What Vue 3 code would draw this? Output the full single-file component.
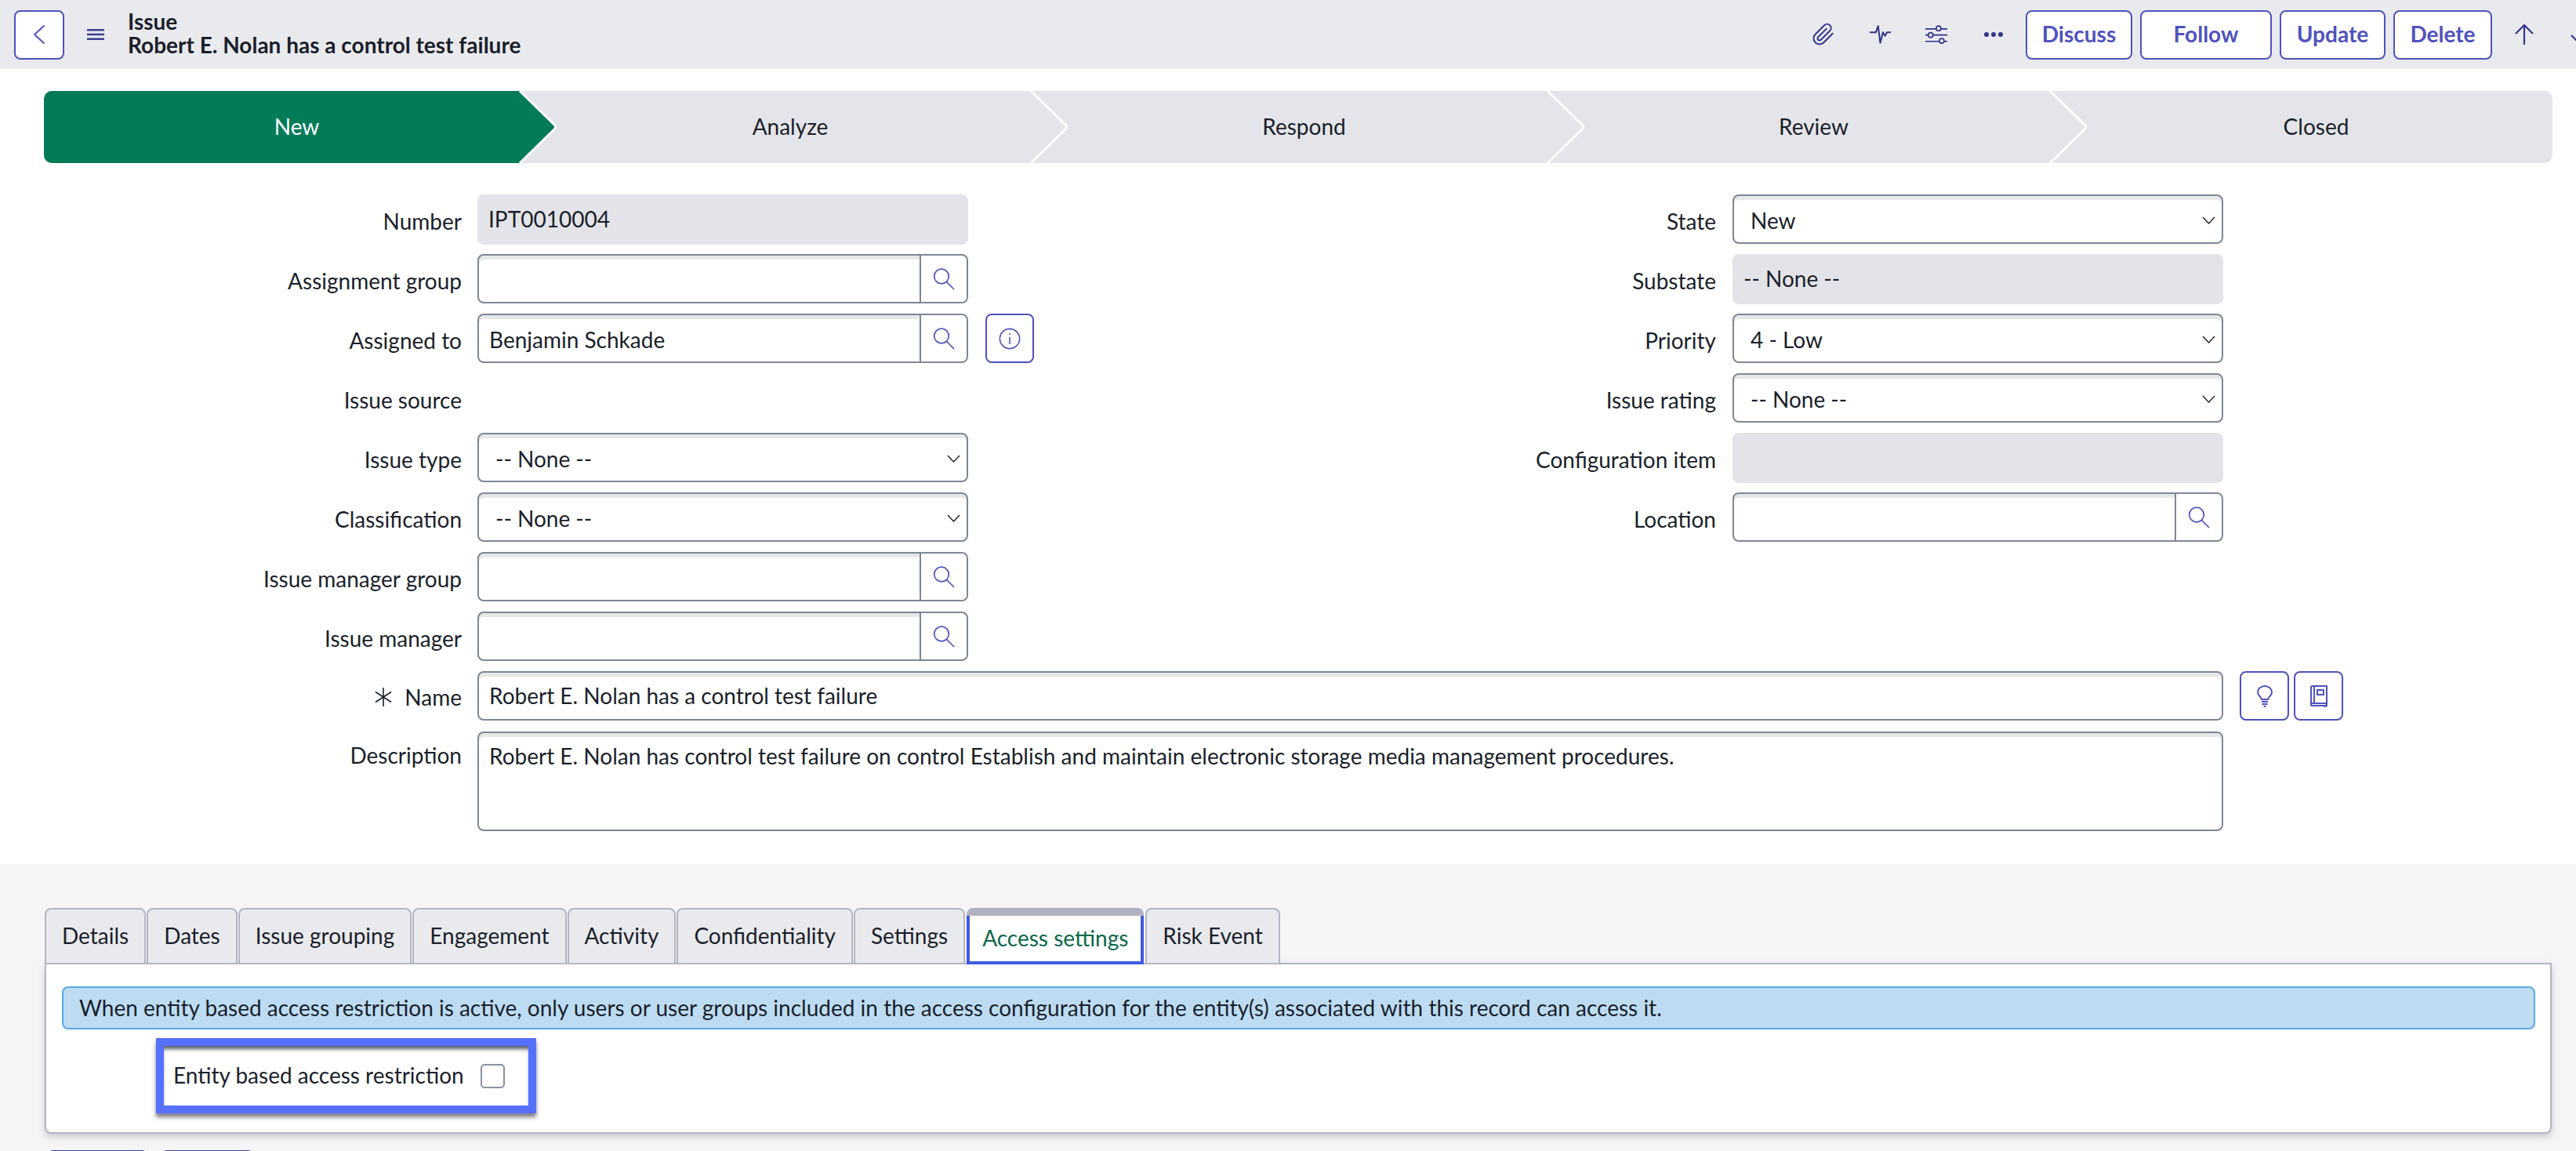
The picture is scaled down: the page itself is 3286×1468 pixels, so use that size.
<script setup>
const steps = [
  { label: 'New', width: 607, current: true },
  { label: 'Analyze', width: 652 },
  { label: 'Respond', width: 659 },
  { label: 'Review', width: 641 },
  { label: 'Closed', width: 641, last: true },
]

const leftFields = [
  { label: 'Number', type: 'readonly', value: 'IPT0010004' },
  { label: 'Assignment group', type: 'lookup', value: '' },
  { label: 'Assigned to', type: 'lookup', value: 'Benjamin Schkade', info: true },
  { label: 'Issue source', type: 'none' },
  { label: 'Issue type', type: 'select', value: '-- None --' },
  { label: 'Classification', type: 'select', value: '-- None --' },
  { label: 'Issue manager group', type: 'lookup', value: '' },
  { label: 'Issue manager', type: 'lookup', value: '' },
]

const rightFields = [
  { label: 'State', type: 'select', value: 'New' },
  { label: 'Substate', type: 'readonly', value: '-- None --' },
  { label: 'Priority', type: 'select', value: '4 - Low' },
  { label: 'Issue rating', type: 'select', value: '-- None --' },
  { label: 'Configuration item', type: 'readonly', value: '' },
  { label: 'Location', type: 'lookup', value: '' },
]

const columns = [
  { name: 'left', fields: leftFields },
  { name: 'right', fields: rightFields },
]

const tabs = ['Details', 'Dates', 'Issue grouping', 'Engagement', 'Activity', 'Confidentiality', 'Settings', 'Access settings', 'Risk Event']
const activeTab = 'Access settings'
</script>

<template>
  <div class="page">
    <header class="topbar">
      <button class="btn back-btn" aria-label="Back">
        <svg width="16" height="26" viewBox="0 0 16 26" fill="none" stroke="currentColor" stroke-width="2" stroke-linecap="round" stroke-linejoin="round"><path d="M14 2 2 13l12 11" /></svg>
      </button>
      <svg class="burger" width="22" height="14" viewBox="0 0 22 14" fill="currentColor"><rect width="22" height="2.5" /><rect y="5.7" width="22" height="2.5" /><rect y="11.5" width="22" height="2.5" /></svg>
      <div class="title">
        <div>Issue</div>
        <div>Robert E. Nolan has a control test failure</div>
      </div>
      <div class="actions">
        <svg class="tool clip" width="30" height="30" viewBox="0 0 24 24" fill="none" stroke="currentColor" stroke-width="1.6" stroke-linecap="round" stroke-linejoin="round"><path d="M21.44 11.05l-9.19 9.19a6 6 0 0 1-8.49-8.49l9.19-9.19a4 4 0 0 1 5.66 5.66l-9.2 9.19a2 2 0 0 1-2.83-2.83l8.49-8.48" /></svg>
        <svg class="tool pulse" width="27" height="24" viewBox="0 0 80 70" fill="none" stroke="currentColor" stroke-width="6" stroke-linejoin="round"><path d="M0 27h23l9-24 8 64 10-40 8 13 7-13h15" /></svg>
        <svg class="tool sliders" width="28" height="24" viewBox="0 0 83 66" fill="none" stroke="currentColor" stroke-width="5">
          <path d="M0 12h83M0 35h83M0 59h83" />
          <circle cx="50" cy="10" r="9" fill="#e9eaee" />
          <circle cx="20" cy="35" r="9" fill="#e9eaee" />
          <circle cx="62" cy="57" r="9" fill="#e9eaee" />
        </svg>
        <svg class="tool dots" width="24" height="6" viewBox="0 0 72 18" fill="currentColor"><circle cx="9" cy="9" r="9" /><circle cx="36" cy="9" r="9" /><circle cx="63" cy="9" r="9" /></svg>
        <button class="btn text-btn discuss">Discuss</button>
        <button class="btn text-btn follow">Follow</button>
        <button class="btn text-btn update">Update</button>
        <button class="btn text-btn delete">Delete</button>
        <svg class="arrow up" width="24" height="26" viewBox="0 0 24 26" fill="none" stroke="currentColor" stroke-width="2.2"><path d="M12 26V2M1 12 12 1l11 11" /></svg>
        <svg class="arrow down" width="24" height="26" viewBox="0 0 24 26" fill="none" stroke="currentColor" stroke-width="2.2"><path d="M12 0v24M1 14l11 11 11-11" /></svg>
      </div>
    </header>

    <main class="form-area">
      <div class="stepper">
        <div v-for="s in steps" :key="s.label" class="step" :class="{ current: s.current }" :style="{ width: s.width + 'px' }">
          <span>{{ s.label }}</span>
          <svg v-if="!s.last" class="chevron" width="50" height="92" viewBox="0 0 50 92">
            <path d="M0 0 L45 44 Q46 46 45 48 L0 92" :fill="s.current ? '#027b59' : 'none'" stroke="#fff" stroke-width="3" />
          </svg>
        </div>
      </div>

      <div class="columns">
        <div v-for="col in columns" :key="col.name" class="col" :class="col.name">
          <div v-for="f in col.fields" :key="f.label" class="row">
            <label class="lbl">{{ f.label }}</label>
            <div v-if="f.type === 'readonly'" class="readonly">{{ f.value }}</div>
            <div v-else-if="f.type === 'select'" class="field select">
              <span>{{ f.value }}</span>
              <svg width="17" height="10" viewBox="0 0 17 10" fill="none" stroke="#1c2130" stroke-width="1.4"><path d="M1 1l7.5 8L16 1" /></svg>
            </div>
            <div v-else-if="f.type === 'lookup'" class="field lookup">
              <span class="lookup-value">{{ f.value }}</span>
              <span class="lookup-btn">
                <svg width="28" height="28" viewBox="0 0 28 28" fill="none" stroke="#4f52bd" stroke-width="1.7"><circle cx="11" cy="10.5" r="9.3" /><path d="M17.5 17.5 27 27" /></svg>
              </span>
            </div>
            <button v-if="f.info" class="btn side-btn info-btn" aria-label="Info">
              <svg width="28" height="28" viewBox="0 0 28 28" fill="none" stroke="currentColor" stroke-width="1.6"><circle cx="14" cy="14" r="12.6" /><path d="M14 12v9" /><circle cx="14" cy="8" r="1" fill="currentColor" stroke="none" /></svg>
            </button>
          </div>
        </div>
      </div>

      <div class="wide-row">
        <label class="lbl name-lbl">
          <svg width="24" height="24" viewBox="0 0 24 24" fill="none" stroke="#1c2130" stroke-width="1.6"><path d="M12 0v24M2 5.5l20 13M22 5.5l-20 13" /></svg>
          Name
        </label>
        <div class="field text-field">Robert E. Nolan has a control test failure</div>
        <div class="side-btns">
          <button class="btn side-btn" aria-label="Suggestions">
            <svg width="20" height="28" viewBox="0 0 20 28" fill="none" stroke="currentColor" stroke-width="2"><path d="M6 18c-.5-3-5-5-5-9a9 8 0 0 1 18 0c0 4-4.500 6-5 9z" /><path d="M6 21h8M6.500 24h7M8.500 27h3" /></svg>
          </button>
          <button class="btn side-btn" aria-label="Knowledge">
            <svg width="22" height="28" viewBox="0 0 22 28" fill="none" stroke="currentColor" stroke-width="2"><path d="M21 1H3Q1 1 1 3v22q0 1 2 1h18zM5 1v22M1 24q0-1 2-1h18" /><rect x="9" y="6" width="8" height="6" /><path d="M19 26v2" /></svg>
          </button>
        </div>
      </div>

      <div class="wide-row desc-row">
        <label class="lbl">Description</label>
        <div class="field text-field desc">Robert E. Nolan has control test failure on control Establish and maintain electronic storage media management procedures.</div>
      </div>
    </main>

    <section class="related">
      <div class="tabs">
        <div v-for="t in tabs" :key="t" class="tab" :class="{ active: t === activeTab }"><span>{{ t }}</span></div>
      </div>
      <div class="panel">
        <div class="info-bar">When entity based access restriction is active, only users or user groups included in the access configuration for the entity(s) associated with this record can access it.</div>
        <div class="callout">
          <span class="callout-text">Entity based access restriction</span>
          <span class="checkbox"></span>
        </div>
      </div>
      <div class="bottom-btns">
        <button class="bottom-btn first" aria-label="Update"></button>
        <button class="bottom-btn second" aria-label="Delete"></button>
      </div>
    </section>
  </div>
</template>

<style>
html, body { margin: 0; background: #fff; }
</style>

<style scoped>
.page {
  height: 100vh;
  overflow: hidden;
  font-family: Lato, "Open Sans", sans-serif;
  font-size: 28px;
  color: #1a1f2b;
}

.btn {
  box-sizing: border-box;
  height: 63px;
  padding: 0;
  background: #fff;
  border: 2px solid #4f52bd;
  border-radius: 8px;
  color: #4f52bd;
  font: inherit;
  display: inline-flex;
  align-items: center;
  justify-content: center;
}

/* top bar */
.topbar { height: 88px; box-sizing: border-box; background: #e9eaee; display: flex; align-items: center; padding-left: 18px; }
.back-btn { width: 64px; }
.burger { margin-left: 29px; color: #3b3d8f; }
.title { margin-left: 30px; font-weight: 700; line-height: 30px; margin-top: -5px; }
.actions { margin-left: auto; display: flex; align-items: center; color: #33358a; margin-right: -17px; }
.tool { flex: none; }
.clip { margin-right: 44px; }
.pulse { margin-right: 44px; }
.sliders { margin-right: 47px; }
.dots { margin-right: 29px; }
.text-btn { font-weight: 700; margin-right: 10px; padding-bottom: 2px; }
.discuss { width: 136px; }
.follow { width: 168px; }
.update { width: 135px; }
.delete { width: 126px; margin-right: 29px; }
.arrow.up { margin-right: 47px; }

/* stepper */
.form-area { padding: 28px 0 42px; }
.stepper { display: flex; margin: 0 30px 0 56px; height: 92px; background: #e4e5ea; border-radius: 10px; }
.step {
  position: relative;
  flex: none;
  box-sizing: border-box;
  padding: 0 0 2px 38px;
  display: flex;
  align-items: center;
  justify-content: center;
}
.step.current { background: #027b59; color: #fff; border-radius: 10px 0 0 10px; }
.chevron { position: absolute; left: 100%; top: 0; z-index: 1; overflow: visible; }

/* form */
.columns { display: flex; margin-top: 40px; }
.col { display: flex; flex-direction: column; gap: 12px; }
.col.left { width: 1650px; }
.col.left .row { grid-template-columns: 589px 626px auto; }
.col.right .row { grid-template-columns: 539px 626px; column-gap: 21px; }
.row { display: grid; column-gap: 20px; height: 64px; align-items: stretch; }
.lbl { text-align: right; align-self: center; padding-top: 3px; white-space: nowrap; }

.readonly {
  box-sizing: border-box;
  background: #e3e4e9;
  border-radius: 8px;
  padding: 0 14px 2px;
  display: flex;
  align-items: center;
}
.field {
  box-sizing: border-box;
  background: #fff;
  border: 2px solid #7f8694;
  border-radius: 8px;
  box-shadow: inset 0 5px 0 #e6e8e8;
  height: 63px;
}
.select { display: flex; align-items: center; justify-content: space-between; padding: 2px 8px 0 21px; }
.lookup { display: flex; align-items: stretch; }
.lookup-value { flex: 1; padding: 2px 0 0 13px; display: flex; align-items: center; }
.lookup-btn { width: 58px; border-left: 2px solid #7f8694; display: flex; align-items: center; justify-content: center; background: #fff; border-radius: 0 7px 7px 0; }
.side-btn { width: 62px; margin-left: 2px; }

.wide-row { display: grid; grid-template-columns: 589px 2227px auto; column-gap: 20px; margin-top: 12px; }
.text-field { padding: 11px 13px 0; line-height: 36px; }
.name-lbl { display: flex; justify-content: flex-end; align-items: center; gap: 15px; }
.side-btns { display: flex; gap: 6px; margin-left: 1px; }
.side-btns .side-btn { margin: 0; width: 63px; }
.desc-row { margin-top: 14px; }
.desc-row .lbl { align-self: start; padding-top: 13px; }
.desc { height: 127px; }

/* related list */
.related { background: #f5f5f7; padding: 56px 31px 0 57px; }
.tabs { display: flex; gap: 1px; height: 72px; position: relative; z-index: 1; }
.tab {
  box-sizing: border-box;
  background: #e9eaee;
  border: 2px solid #b3b6c2;
  border-radius: 8px 8px 0 0;
  padding: 0 20px 2px;
  display: flex;
  align-items: center;
}
.tab.active {
  background: #fff;
  border: 0;
  border-top: 10px solid #b0b3bf;
  padding: 0;
  margin: 0 1px;
  color: #0a6849;
}
.tab.active span { display: flex; align-items: center; height: 100%; padding: 0 16px 2px; box-sizing: border-box; border: 4px solid #3e5be0; border-top: 0; }
.panel {
  box-sizing: border-box;
  height: 218px;
  margin-top: -2px;
  background: #fff;
  border: 2px solid #b3b6c2;
  border-radius: 0 0 8px 8px;
  box-shadow: 0 4px 8px rgba(120, 124, 140, .35);
  padding: 28px 19px 0 20px;
}
.info-bar {
  box-sizing: border-box;
  height: 55px;
  background: #bddcf2;
  border: 2px solid #5ba8e0;
  border-radius: 8px;
  padding: 0 20px 2px;
  display: flex;
  align-items: center;
}
.callout {
  display: inline-flex;
  align-items: center;
  gap: 21px;
  height: 76px;
  margin: 11px 0 0 120px;
  padding: 0 30px 0 12px;
  background: #fff;
  border: 10px solid #5670ff;
  box-shadow: inset 0 6px 5px -2px #555c66, 0 5px 5px rgba(60, 60, 70, .65);
}
.callout-text { padding-bottom: 3px; }
.checkbox { width: 31px; height: 31px; box-sizing: border-box; background: #fff; border: 2px solid #8a91a0; border-radius: 5px; }
.bottom-btns { display: flex; gap: 16px; margin: 21px 0 0 3px; }
.bottom-btn { box-sizing: border-box; height: 63px; background: #fff; border: 2px solid #3e3f96; border-radius: 8px; padding: 0; }
.bottom-btn.first { width: 129px; }
.bottom-btn.second { width: 119px; }
</style>
